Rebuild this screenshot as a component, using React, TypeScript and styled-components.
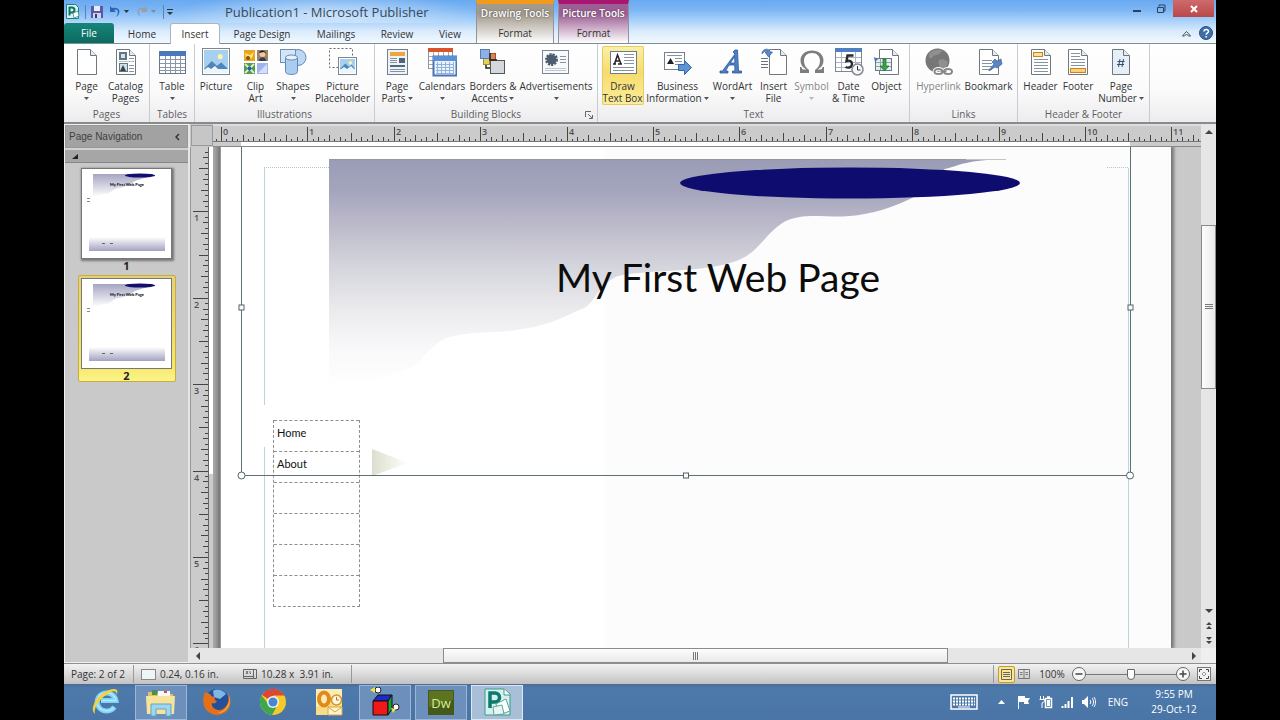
import React from "react";
import styled, { createGlobalStyle, css } from "styled-components";

const GlobalStyle = createGlobalStyle`
  *, *::before, *::after { box-sizing: border-box; }
  body { margin: 0; background: #000; }
  button { font: inherit; color: inherit; padding: 0; margin: 0; border: 0; background: none; }
  svg { display: block; flex: none; }
`;

const Shell = styled.div`
  display: flex;
  flex-direction: column;
  height: 100vh;
  min-height: 480px;
  margin: 0 5%;
  overflow: hidden;
  font: 10px/12px "Open Sans", "Noto Sans", sans-serif;
  color: #333;
`;

/* ---------- Title bar and tabs ---------- */

const TopBar = styled.header`
  display: flex;
  height: 44px;
  flex: none;
  background: linear-gradient(#68a9f0 0, #7db6f4 10px, #a5cff9 20px, #d9eafc 31px, #f3f9fe 43px);
  border-bottom: 1px solid #7c8f94;
`;

const TopLeft = styled.div`
  display: flex;
  flex-direction: column;
  width: 412px;
  flex: none;
`;

const TitleRow = styled.div`
  display: flex;
  align-items: center;
  height: 23px;
  background: radial-gradient(ellipse 150px 22px at 64% 60%, rgba(255, 255, 255, 0.55), rgba(255, 255, 255, 0));
`;

const QuickAccess = styled.div`
  display: flex;
  align-items: center;
  gap: 4px;
  width: 161px;
  height: 20px;
`;

const QuickButton = styled.button`
  display: flex;
  align-items: center;
`;

const Title = styled.h1`
  margin: 0;
  font-size: 13px;
  line-height: 20px;
  font-weight: 400;
  white-space: nowrap;
  color: #38485a;
`;

const TabRow = styled.nav`
  display: flex;
  height: 20px;
`;

const Tab = styled.button<{ $w: number; $kind?: "file" | "active" }>`
  width: ${(p) => p.$w}px;
  height: 21px;
  text-align: center;
  ${(p) =>
    p.$kind === "file" &&
    css`
      height: 20px;
      color: #fff;
      border-radius: 3px 3px 0 0;
      background: linear-gradient(#17857a, #0c6a60);
    `}
  ${(p) =>
    p.$kind === "active" &&
    css`
      background: #fff;
      border: 1px solid #a9b6c2;
      border-bottom: 0;
      border-radius: 3px 3px 0 0;
    `}
`;

const ContextGroup = styled.div<{ $w: number; $accent: string; $shade: string }>`
  display: flex;
  flex-direction: column;
  width: ${(p) => p.$w}px;
  margin-right: 4px;
  border-top: 4px solid ${(p) => p.$accent};
  border-left: 1px solid #8f94a0;
  border-right: 1px solid #8f94a0;
  background: linear-gradient(${(p) => p.$shade} 0, ${(p) => p.$shade} 10px, #fff 39px);
`;

const ContextTitle = styled.span`
  height: 19px;
  line-height: 19px;
  font-weight: 600;
  color: #fff;
  text-align: center;
  white-space: nowrap;
  text-shadow: 0 0 2px #444;
`;

const ContextTab = styled.button`
  height: 20px;
  text-align: center;
`;

const TopRight = styled.div`
  display: flex;
  flex: 1;
  flex-direction: column;
  align-items: flex-end;
  justify-content: space-between;
`;

const WindowButtons = styled.div`
  display: flex;
  padding-right: 2px;
`;

const WindowButton = styled.button<{ $close?: boolean }>`
  display: flex;
  align-items: center;
  justify-content: center;
  width: ${(p) => (p.$close ? 41 : 24)}px;
  height: 17px;
  background: ${(p) => (p.$close ? "linear-gradient(#cf6a6c, #b9474a)" : "none")};
`;

const HelpButtons = styled.div`
  display: flex;
  align-items: center;
  gap: 8px;
  height: 20px;
  padding-right: 3px;
`;

/* ---------- Ribbon ---------- */

const Ribbon = styled.section`
  display: flex;
  flex: none;
  height: 78px;
  background: linear-gradient(#fff, #fbfbfc 45px, #ececee);
`;

const Group = styled.div<{ $w: number }>`
  position: relative;
  display: flex;
  flex-direction: column;
  flex: none;
  width: ${(p) => p.$w}px;
  border-right: 1px solid #c9cbce;
`;

const GroupButtons = styled.div`
  display: flex;
  justify-content: center;
  height: 63px;
  padding-top: 2px;
`;

const GroupLabel = styled.div`
  line-height: 14px;
  text-align: center;
  color: #5e5e5e;
`;

const Launcher = styled.button`
  position: absolute;
  right: 4px;
  bottom: 3px;
`;

const Tool = styled.button<{ $w: number; $lit?: boolean; $dim?: boolean }>`
  display: flex;
  flex-direction: column;
  align-items: center;
  flex: none;
  width: ${(p) => p.$w}px;
  height: 59px;
  padding-top: 2px;
  border: 0;
  border-radius: 2px;
  line-height: 12px;
  color: ${(p) => (p.$dim ? "#858585" : "#333")};
  ${(p) =>
    p.$lit &&
    css`
      background: linear-gradient(#faf0a8, #f6dc6a 45%, #fbee9c);
      box-shadow: inset 0 0 0 1px #e3cb6a;
    `}
`;

const ToolText = styled.span`
  display: flex;
  align-items: center;
  justify-content: center;
  gap: 2px;
  height: 12px;
  white-space: nowrap;
`;

const IconSlot = styled.span`
  height: 32px;
`;

const Caret = ({ dim }: { dim?: boolean }) => (
  <svg width="5" height="3" viewBox="0 0 5 3">
    <path d="M0 0h5L2.500 3z" fill={dim ? "#b5b5b5" : "#555"} />
  </svg>
);

/* ---------- Icons ---------- */

const Big = ({ children }: { children: React.ReactNode }) => (
  <svg width="30" height="29" viewBox="0 0 30 29" aria-hidden="true">
    {children}
  </svg>
);

const Sheet = ({ x = 5, w = 20, fill = "#fff" }: { x?: number; w?: number; fill?: string }) => (
  <g stroke="#70777f" strokeLinejoin="round">
    <path d={`M${x + 0.5} 1.5h${w - 7}l6 6v19h-${w - 1}z`} fill={fill} />
    <path d={`M${x + w - 6.5} 1.5v6h6`} fill="#e6ebf0" />
  </g>
);

const Lines = ({ x, y, w, n, gap = 3, c = "#8793a3" }: { x: number; y: number; w: number; n: number; gap?: number; c?: string }) => (
  <path d={Array.from({ length: n }, (_, i) => `M${x} ${y + i * gap}h${w}`).join("")} stroke={c} fill="none" />
);

const Scenery = ({ x, y, w, h }: { x: number; y: number; w: number; h: number }) => (
  <g>
    <rect x={x + 0.5} y={y + 0.5} width={w - 1} height={h - 1} fill="#fff" stroke="#7b8894" />
    <rect x={x + 2} y={y + 2} width={w - 4} height={h - 4} fill="#a6d0ee" />
    <circle cx={x + w * 0.65} cy={y + h * 0.32} r={w * 0.09} fill="#fff3b0" />
    <path
      d={`M${x + 2} ${y + h - 6}l${w * 0.28} -${h * 0.3}l${w * 0.18} ${h * 0.18}l${w * 0.16} -${h * 0.12}L${x + w - 2} ${y + h - 6}z`}
      fill="#4f86b8"
    />
    <path d={`M${x + 2} ${y + h - 5}l4 -3l3 2l4 -3l3 3L${x + w - 2} ${y + h - 6}V${y + h - 2}H${x + 2}z`} fill="#eaf5fc" />
  </g>
);

const icons: Record<string, React.ReactNode> = {
  page: (
    <Big>
      <Sheet />
    </Big>
  ),
  catalog: (
    <Big>
      <Sheet />
      <rect x="8" y="4" width="8" height="8" fill="#5f7582" />
      <rect x="10" y="6" width="4" height="4" fill="#d5e0e8" />
      <rect x="8.500" y="15.500" width="8" height="8" fill="#d5dde2" stroke="#5f7582" />
      <path d="M9 23l3-6 3 6z" fill="#34444e" />
      <Lines x={18} y={10.5} w={5} n={2} />
      <Lines x={18} y={17.5} w={5} n={3} />
      <Lines x={8} y={13.5} w={14} n={1} c="#b8c0c8" />
    </Big>
  ),
  table: (
    <Big>
      <rect x="2.500" y="3.500" width="26" height="22" fill="#fff" stroke="#6b7888" />
      <rect x="2" y="3" width="27" height="5" fill="#4a78bd" />
      <path d="M3 11.500h25M3 15.500h25M3 19.500h25M3 22.500h25M8.500 8v17M13.500 8v17M18.500 8v17M23.500 8v17" stroke="#8898aa" />
    </Big>
  ),
  picture: (
    <Big>
      <Scenery x={1} y={0} w={28} h={27} />
    </Big>
  ),
  clipart: (
    <Big>
      <rect x="3" y="2" width="11" height="11" fill="#e8a321" />
      <path d="M4 5l5 2 4-3-2 6-6 1z" fill="#ffe36a" />
      <circle cx="7" cy="10" r="2" fill="#8b4b16" />
      <rect x="16" y="2" width="11" height="11" fill="#9c8068" />
      <circle cx="21.500" cy="6" r="3" fill="#f0c8a0" />
      <path d="M18 13c0-5 7-5 7 0z" fill="#343c58" />
      <path d="M18 5c1-4 7-3 7 1l-2-2z" fill="#2c2018" />
      <rect x="3" y="15" width="11" height="11" fill="#4f9a56" />
      <path d="M4 16l9 9M13 16l-9 9" stroke="#dcefb8" strokeWidth="2" />
      <circle cx="8.500" cy="20.500" r="2" fill="#2e58b4" />
      <rect x="16" y="15" width="11" height="11" fill="#9fb4ee" />
      <path d="M17 25l9-9v9z" fill="#d7def9" />
    </Big>
  ),
  shapes: (
    <Big>
      <circle cx="20" cy="9.500" r="8" fill="#bcd8f2" stroke="#6289b4" />
      <rect x="2.500" y="1.500" width="15" height="13" fill="#d3e5f6" stroke="#6f8fb2" />
      <path d="M7.500 9.500v14c0 4 12 4 12 0v-14z" fill="#a9ccf0" stroke="#6289b4" />
      <ellipse cx="13.500" cy="9.500" rx="6" ry="2.500" fill="#e6f2fc" stroke="#6289b4" />
    </Big>
  ),
  placeholder: (
    <Big>
      <path d="M1.500 .5h23v19h-23z" fill="#fff" stroke="#666" strokeDasharray="2 2" />
      <Scenery x={10} y={9} w={19} h={18} />
    </Big>
  ),
  pageparts: (
    <Big>
      <rect x="5.500" y="1.500" width="20" height="25" fill="#eef3f9" stroke="#707f90" />
      <rect x="8" y="4" width="15" height="4" fill="#f0a43c" />
      <Lines x={8} y={10.5} w={7} n={3} gap={2} />
      <rect x="17" y="10" width="6" height="5" fill="#4f6276" />
      <rect x="8" y="17" width="15" height="2" fill="#56697c" />
      <Lines x={8} y={21.5} w={15} n={2} gap={2} />
    </Big>
  ),
  calendars: (
    <Big>
      <rect x="1.500" y=".5" width="24" height="20" fill="#fff" stroke="#8a97a6" />
      <rect x="1" y="0" width="25" height="4" fill="#d9542b" />
      <path d="M2 8.500h23M2 12.500h23M2 16.500h23M6.500 4v16M11.500 4v16M16.500 4v16M21.500 4v16" stroke="#c0a398" />
      <rect x="6.500" y="8.500" width="23" height="19" fill="#eaf3fc" stroke="#4a74b4" strokeWidth="2" />
      <rect x="6" y="8" width="24" height="5" fill="#5b8fd6" />
      <path d="M9 16.500h18M9 19.500h18M9 22.500h18M9 25.500h18M10.500 14v12M14.500 14v12M18.500 14v12M22.500 14v12M26.500 14v12" stroke="#8fb2de" />
    </Big>
  ),
  borders: (
    <Big>
      <rect x="11.500" y="5.500" width="6" height="6" fill="#e0824e" stroke="#9a5428" />
      <rect x="5.500" y="10.500" width="6" height="6" fill="#e6d25a" stroke="#a08c28" />
      <rect x="2.500" y="1.500" width="9" height="9" fill="#8db1e6" stroke="#5a7cb4" />
      <rect x="12.500" y="12.500" width="14" height="13" fill="#d4d7db" stroke="#555" />
      <path d="M12 5v7h7M8 17v3h4" fill="none" stroke="#222" strokeWidth="1.500" />
    </Big>
  ),
  ads: (
    <Big>
      <rect x="1.500" y="2.500" width="26" height="23" fill="#f7f9fb" stroke="#7a8694" />
      <circle cx="10.500" cy="11.500" r="5" fill="#4d5d70" />
      <circle cx="10.500" cy="11.500" r="5" fill="none" stroke="#4d5d70" strokeWidth="3" strokeDasharray="2 1" />
      <Lines x={19} y={8.5} w={6} n={3} />
      <Lines x={4} y={20.5} w={21} n={2} gap={2} c="#c0c7ce" />
    </Big>
  ),
  textbox: (
    <Big>
      <rect x="2.500" y="3.500" width="26" height="22" fill="#fff" stroke="#6d7c8d" />
      <path d="M5 16h3M10 16h4M6.500 16l3-9 3.500 9M7.500 13h4" stroke="#222" strokeWidth="1.500" fill="none" />
      <Lines x={16} y={6.5} w={10} n={4} />
      <Lines x={5} y={19.5} w={21} n={2} />
    </Big>
  ),
  business: (
    <Big>
      <rect x="1.500" y="4.500" width="20" height="17" fill="#fff" stroke="#75818e" />
      <path d="M4 16l3.500-6 3.500 6z" fill="#222" />
      <Lines x={4} y={7.5} w={15} n={1} />
      <Lines x={12} y={10.5} w={7} n={3} />
      <path d="M15.500 16.500h6v-4l7 7-7 7v-4h-6z" fill="#5e93d4" stroke="#3765a4" />
    </Big>
  ),
  wordart: (
    <Big>
      <path
        d="M19.500 2l1 21h3v2h-9v-2h2.500l-.3-6H11l-3.500 6H10v2H2v-2h2.500L17 6l-2-2 2-2zM16.600 8.500L12.300 15h4.600z"
        fill="#4b80c8"
        stroke="#2c5697"
        strokeWidth=".8"
      />
    </Big>
  ),
  insertfile: (
    <Big>
      <Sheet x={10} w={18} />
      <Lines x={2} y={10.5} w={7} n={4} c="#66717e" />
      <path d="M3 6c0-6 8-6 8-2h2.500L9.500 9 6 4h2.500C8 2 5 3 3 6z" fill="#5a8bce" stroke="#365f9c" strokeWidth=".7" />
    </Big>
  ),
  symbol: (
    <Big>
      <path
        d="M3 25h9v-3c-3-2-5-5-5-9 0-5 3-8 8-8s8 3 8 8c0 4-2 7-5 9v3h9v-6h-1.500c-.3 2-1 2.500-2.500 2.500h-2.500c4-2 6-5 6-9 0-6-5-10-11.500-10S3.500 6.500 3.500 12.500c0 4 2 7 6 9H7c-1.500 0-2.200-.5-2.500-2.500H3z"
        fill="#7d7d7d"
      />
    </Big>
  ),
  date: (
    <Big>
      <rect x="1.500" y=".5" width="26" height="23" fill="#fff" stroke="#7a8796" />
      <rect x="1" y="0" width="27" height="4" fill="#4f7fc4" />
      <path d="M2 9.500h25M2 14.500h25M2 19.500h25M7.500 4v19M21.500 4v19" stroke="#a9b5c2" />
      <path d="M19.500 7.500h-6l-1 5.500c3-1 5.500 0 5.500 3s-3 4.500-6.500 3" fill="none" stroke="#2a2a2a" strokeWidth="2.400" />
      <circle cx="23.500" cy="21.500" r="5.500" fill="#f7f9fb" stroke="#808a94" strokeWidth="1.500" />
      <path d="M23.500 18v4h3" fill="none" stroke="#333" />
    </Big>
  ),
  object: (
    <Big>
      <Sheet x={7} w={20} />
      <rect x="3.500" y="10.500" width="16" height="12" fill="#e6eee6" stroke="#5e7d8e" />
      <path d="M4 14.500h15M4 18.500h15M8.500 11v11" stroke="#8fa6b0" />
      <path d="M11 11v7H8l4.500 5 4.500-5h-3v-7z" fill="#3aa148" stroke="#1e6e2b" strokeWidth=".7" />
      <path d="M2 9l4 2-3 3z" fill="#3b74c0" />
    </Big>
  ),
  hyperlink: (
    <Big>
      <circle cx="13.500" cy="12.500" r="12" fill="#777" />
      <path d="M5 6c4-5 10-5 14-3-3 1-3 4-7 4-3 0-3 4-7 3zM15 12c4-2 7 0 9 2-1 5-4 8-7 9 0-4-4-6-2-11z" fill="#8f8f8f" />
      <g fill="none" stroke="#fff" strokeWidth="4">
        <ellipse cx="14.500" cy="23.500" rx="4" ry="2.500" />
        <ellipse cx="24" cy="23.500" rx="4" ry="2.500" />
      </g>
      <g fill="none" stroke="#888" strokeWidth="2">
        <ellipse cx="14.500" cy="23.500" rx="4" ry="2.500" />
        <ellipse cx="24" cy="23.500" rx="4" ry="2.500" />
        <path d="M16.500 23.500h6" />
      </g>
    </Big>
  ),
  bookmark: (
    <Big>
      <Sheet />
      <Lines x={8} y={12.5} w={10} n={4} />
      <path d="M15 22l5-6-2-2 3-3 2 2 4-2 1 5-5 4-2-1-6 4z" fill="#5a85c4" stroke="#36588e" strokeWidth=".6" />
    </Big>
  ),
  header: (
    <Big>
      <Sheet />
      <rect x="7.500" y="4.500" width="9" height="4" fill="#fbe09a" stroke="#c78520" />
      <Lines x={8} y={11.5} w={14} n={5} />
    </Big>
  ),
  footer: (
    <Big>
      <Sheet />
      <Lines x={8} y={5.5} w={9} n={2} />
      <Lines x={8} y={11.5} w={14} n={3} />
      <rect x="7.500" y="20.500" width="15" height="4" fill="#fbcf7c" stroke="#c78520" />
    </Big>
  ),
  pagenumber: (
    <Big>
      <Sheet x={6} w={18} fill="#e4effa" />
      <path d="M14 11l-1.500 8M17.500 11L16 19M11.500 13.500h7M11 16.500h7" stroke="#3c4a66" />
    </Big>
  ),
};

/* ---------- Ribbon data ---------- */

type ToolDef = { icon: string; w: number; lines: string[]; drop?: boolean; lit?: boolean; dim?: boolean };
type GroupDef = { label: string; w: number; launcher?: boolean; tools: ToolDef[] };

const groups: GroupDef[] = [
  {
    label: "Pages",
    w: 86,
    tools: [
      { icon: "page", w: 38, lines: ["Page"], drop: true },
      { icon: "catalog", w: 40, lines: ["Catalog", "Pages"] },
    ],
  },
  { label: "Tables", w: 45, tools: [{ icon: "table", w: 42, lines: ["Table"], drop: true }] },
  {
    label: "Illustrations",
    w: 180,
    tools: [
      { icon: "picture", w: 41, lines: ["Picture"] },
      { icon: "clipart", w: 38, lines: ["Clip", "Art"] },
      { icon: "shapes", w: 37, lines: ["Shapes"], drop: true },
      { icon: "placeholder", w: 62, lines: ["Picture", "Placeholder"] },
    ],
  },
  {
    label: "Building Blocks",
    w: 223,
    launcher: true,
    tools: [
      { icon: "pageparts", w: 38, lines: ["Page", "Parts"], drop: true },
      { icon: "calendars", w: 52, lines: ["Calendars"], drop: true },
      { icon: "borders", w: 50, lines: ["Borders &", "Accents"], drop: true },
      { icon: "ads", w: 76, lines: ["Advertisements"], drop: true },
    ],
  },
  {
    label: "Text",
    w: 312,
    tools: [
      { icon: "textbox", w: 42, lines: ["Draw", "Text Box"], lit: true },
      { icon: "business", w: 68, lines: ["Business", "Information"], drop: true },
      { icon: "wordart", w: 42, lines: ["WordArt"], drop: true },
      { icon: "insertfile", w: 40, lines: ["Insert", "File"] },
      { icon: "symbol", w: 36, lines: ["Symbol"], drop: true, dim: true },
      { icon: "date", w: 38, lines: ["Date", "& Time"] },
      { icon: "object", w: 38, lines: ["Object"] },
    ],
  },
  {
    label: "Links",
    w: 108,
    tools: [
      { icon: "hyperlink", w: 50, lines: ["Hyperlink"], dim: true },
      { icon: "bookmark", w: 50, lines: ["Bookmark"] },
    ],
  },
  {
    label: "Header & Footer",
    w: 132,
    tools: [
      { icon: "header", w: 39, lines: ["Header"] },
      { icon: "footer", w: 36, lines: ["Footer"] },
      { icon: "pagenumber", w: 50, lines: ["Page", "Number"], drop: true },
    ],
  },
];

const tabs: { label: string; w: number; kind?: "file" | "active" }[] = [
  { label: "File", w: 50, kind: "file" },
  { label: "Home", w: 56 },
  { label: "Insert", w: 50, kind: "active" },
  { label: "Page Design", w: 84 },
  { label: "Mailings", w: 64 },
  { label: "Review", w: 58 },
  { label: "View", w: 48 },
];

/* ---------- Workspace ---------- */

const Workspace = styled.main`
  display: flex;
  flex: 1;
  min-height: 0;
  border-top: 2px solid #8a8a8a;
  background: #c9c9c9;
`;

const NavPane = styled.aside`
  display: flex;
  flex-direction: column;
  width: 126px;
  flex: none;
  border: 1px solid #f2f2f2;
  border-right: 2px solid #e6e6e6;
  background: #c9c9c9;
`;

const NavHead = styled.div`
  display: flex;
  align-items: center;
  justify-content: space-between;
  height: 23px;
  padding: 0 7px 0 3px;
  font-family: "Liberation Sans", sans-serif;
  font-size: 10px;
  color: #3f3f3f;
  background: #a2a2a2;
  border: 1px solid #979797;
`;

const NavSub = styled.div`
  height: 15px;
  padding: 4px 7px;
  background: #a6a6a6;
  border-top: 2px solid #d2d2d2;
  border-bottom: 1px solid #888;
`;

const PageList = styled.div`
  display: flex;
  flex-direction: column;
  align-items: center;
  gap: 3px;
  padding-top: 2px;
`;

const PageItem = styled.button<{ $selected?: boolean }>`
  display: flex;
  flex-direction: column;
  align-items: center;
  width: 98px;
  height: 107px;
  padding-top: 2px;
  font-size: 11px;
  line-height: 13px;
  font-weight: 700;
  color: #222;
  border: 1px solid ${(p) => (p.$selected ? "#c8ad3e" : "transparent")};
  border-radius: 2px;
  background: ${(p) => (p.$selected ? "linear-gradient(#e4d07a, #f5e66c 90px, #fdf48a)" : "none")};

  svg {
    background: #fff;
    border: 1px solid #777;
    box-shadow: ${(p) => (p.$selected ? "none" : "1px 1px 2px 1px #777")};
  }
`;

const Editor = styled.div`
  display: grid;
  flex: 1;
  min-width: 0;
  grid-template-columns: 23px minmax(0, 1fr) 15px;
  grid-template-rows: 23px minmax(0, 1fr) 15px;
`;

const RulerCorner = styled.div`
  margin: 1px 0 1px 1px;
  border: 1px solid #999;
  background: #c6c6c6;
`;

const RulerCell = styled.div`
  overflow: hidden;
  background: #cbcbcb;
  font-size: 9px;
  font-weight: 600;
`;

const Canvas = styled.div`
  position: relative;
  overflow: hidden;
  background: linear-gradient(90deg, #aaa 0, #999 3px, #777 7px, #c9c9c9 8px);
`;

const Publication = styled.article`
  position: absolute;
  top: 0;
  bottom: 0;
  left: 8px;
  width: 950px;
  background: linear-gradient(90deg, #fff 383px, #fcfcfc 384px);
  box-shadow: 2px 0 3px 1px #777;
  overflow: hidden;
`;

const Artwork = styled.svg`
  position: absolute;
  top: 0;
  left: 0;
`;

const Heading = styled.h2`
  position: absolute;
  top: 106px;
  left: 335px;
  margin: 0;
  font: 400 39px/48px Lato, "Open Sans", sans-serif;
  white-space: nowrap;
  color: #0c0c0c;
`;

const SiteLinks = styled.ul`
  position: absolute;
  top: 273px;
  left: 52px;
  width: 87px;
  margin: 0;
  padding: 0;
  list-style: none;
  font: 11px/24px Lato, "Open Sans", sans-serif;
  color: #111;
  border: 1px dashed #8f8f8f;
  border-top: 0;

  li {
    height: 31px;
    padding-left: 3px;
    border-top: 1px dashed #8f8f8f;
  }
`;

const VScroll = styled.div`
  display: flex;
  flex-direction: column;
  grid-row: 1 / 3;
  grid-column: 3;
  background: #e6e6e6;
`;

const HScroll = styled.div`
  display: flex;
  grid-row: 3;
  grid-column: 1 / 3;
  background: #e6e6e6;
`;

const ScrollCorner = styled.div`
  background: #efefef;
`;

const Arrow = styled.button`
  display: flex;
  align-items: center;
  justify-content: center;
  flex: 0 0 15px;
`;

const Gap = styled.div<{ $grow: number }>`
  flex: ${(p) => p.$grow} 1 0;
`;

const Thumb = styled.div<{ $grow: number; $vertical?: boolean }>`
  display: flex;
  align-items: center;
  justify-content: center;
  flex: ${(p) => p.$grow} 1 0;
  border: 1px solid #8b8b8b;
  background: linear-gradient(${(p) => (p.$vertical ? "90deg" : "180deg")}, #fdfdfd, #e9e9e9);
`;

/* ---------- Status bar ---------- */

const StatusBar = styled.footer`
  display: flex;
  align-items: center;
  flex: none;
  height: 21px;
  padding-right: 5px;
  border-top: 1px solid #8f8f8f;
  background: linear-gradient(#f3f3f3, #c2c2c2);
`;

const StatusItem = styled.div<{ $w: number; $divided?: boolean }>`
  display: flex;
  align-items: center;
  gap: 4px;
  width: ${(p) => p.$w}px;
  height: 18px;
  padding-left: 7px;
  white-space: pre;
  border-right: ${(p) => (p.$divided ? "1px solid #999" : "0")};
`;

const ZoomTools = styled.div`
  display: flex;
  align-items: center;
  margin-left: auto;
  height: 18px;
  padding-left: 4px;
  border-left: 1px solid #999;
`;

const ViewButton = styled.button<{ $on?: boolean }>`
  display: flex;
  align-items: center;
  justify-content: center;
  width: 17px;
  height: 17px;
  border-radius: 2px;
  ${(p) =>
    p.$on &&
    css`
      background: #fbe694;
      border: 1px solid #c59a2a;
    `}
`;

const ZoomValue = styled.span`
  width: 40px;
  text-align: center;
`;

const RoundButton = styled.button`
  display: flex;
`;

const ZoomSlider = styled.input`
  appearance: none;
  width: 90px;
  height: 14px;
  margin: 0;
  background: linear-gradient(#777, #777) center / 100% 1px no-repeat;

  &::-webkit-slider-thumb {
    appearance: none;
    width: 8px;
    height: 11px;
    border: 1px solid #666;
    border-radius: 1px 1px 4px 4px;
    background: #fff;
  }
`;

const FitButton = styled.button`
  margin-left: 7px;
`;

/* ---------- Taskbar ---------- */

const Taskbar = styled.div`
  display: flex;
  align-items: center;
  flex: none;
  height: 36px;
  padding: 0 4px 0 15px;
  color: #fff;
  background: linear-gradient(#4a6c96, #4d79ab 4px, #4a74a6);
`;

const AppButton = styled.button<{ $state?: "open" | "front" }>`
  display: flex;
  align-items: center;
  justify-content: center;
  width: 52px;
  height: 35px;
  margin-right: 4px;
  border: 1px solid transparent;
  ${(p) =>
    p.$state === "open" &&
    css`
      background: #6c90bb;
      border-color: #9db6d4;
    `}
  ${(p) =>
    p.$state === "front" &&
    css`
      background: #a9bfd8;
      border-color: #dde7f1;
    `}
`;

const Tray = styled.div`
  display: flex;
  align-items: center;
  gap: 8px;
  margin-left: auto;
`;

const TrayButton = styled.button<{ $gapAfter?: number }>`
  display: flex;
  margin-right: ${(p) => p.$gapAfter ?? 0}px;
`;

const Clock = styled.time`
  width: 76px;
  text-align: center;
  line-height: 15px;
`;

/* ---------- Rulers ---------- */

const INCH = 86.4;
const tickLength = (n: number) => (n % 16 === 0 ? 15 : n % 8 === 0 ? 9 : n % 4 === 0 ? 7 : n % 2 === 0 ? 5 : 3);

const HorizontalRuler = () => {
  const ticks = Array.from({ length: 192 }, (_, i) => i - 1);
  const at = (n: number) => Math.round(8 + (n * INCH) / 16);
  return (
    <svg width="2000" height="23" aria-hidden="true">
      <rect width="2000" height="2" fill="#ddd" />
      <rect x="28" y="18" width="889" height="4" fill="#fff" />
      <path d={ticks.map((n) => `M${at(n) + 0.5} 18v-${tickLength(n)}`).join("")} stroke="#444" />
      <path d="M0 17.500H2000" stroke="#777" />
      <path d="M0 22.500H2000" stroke="#888" />
      {Array.from({ length: 12 }, (_, i) => (
        <text key={i} x={at(i * 16) + 2} y={11} fill="#505050">
          {i}
        </text>
      ))}
    </svg>
  );
};

const VerticalRuler = () => {
  const ticks = Array.from({ length: 160 }, (_, i) => i + 5);
  const at = (n: number) => Math.round(-22 + (n * INCH) / 16);
  return (
    <svg width="23" height="1000" aria-hidden="true">
      <rect width="1" height="1000" fill="#999" />
      <rect x="19" width="4" height="327" fill="#fff" />
      <path d={ticks.map((n) => `M18 ${at(n) + 0.5}h-${tickLength(n)}`).join("")} stroke="#444" />
      <path d="M18.500 0V1000" stroke="#666" />
      {Array.from({ length: 6 }, (_, i) => (
        <text key={i} x={4} y={at((i + 1) * 16) + 10} fill="#505050">
          {i + 1}
        </text>
      ))}
    </svg>
  );
};

/* ---------- Drawings ---------- */

const WAVE =
  "M108 12H785C745 13 740 18 724 22C712 28 700 45 691 51C665 64 640 69 622 69.500C600 70 580 66 563 75C543 87 537 108 512 115C480 126 430 122 397 129C375 138 374 160 358 163C340 172 320 180 301 182C280 187 250 183 225 191C205 202 200 216 191 220C160 232 135 238 108 241Z";

const Banner = () => (
  <Artwork width="950" height="700" aria-hidden="true">
    <defs>
      <linearGradient id="wash" x1="0" y1="0" x2="0" y2="1">
        <stop offset="0" stopColor="#9a9cb6" />
        <stop offset=".14" stopColor="#a4a5bd" />
        <stop offset=".26" stopColor="#b8b6c7" />
        <stop offset=".45" stopColor="#d2d2db" />
        <stop offset=".66" stopColor="#ebebee" />
        <stop offset=".82" stopColor="#f8f8fa" />
        <stop offset="1" stopColor="#fff" />
      </linearGradient>
      <linearGradient id="wedge">
        <stop offset="0" stopColor="#dcdecd" />
        <stop offset="1" stopColor="#fff" />
      </linearGradient>
    </defs>
    <path d="M43.500 21V258M43.500 300V700M907.500 21V700" stroke="#bcd4de" />
    <path d="M43 20.500H108M886 20.500H907" stroke="#b4c6d0" strokeDasharray="1 1" />
    <path d={WAVE} fill="url(#wash)" />
    <path d="M108 12.500H745" stroke="#97979f" />
    <path d="M745 12.500H785" stroke="#c4c4c8" />
    <ellipse cx="629" cy="36" rx="170" ry="15.500" fill="#0f0c70" />
    <path d="M151 302L187 316L151 329Z" fill="url(#wedge)" />
  </Artwork>
);

const SelectionFrame = () => (
  <Artwork width="950" height="700" aria-hidden="true">
    <path d="M20.500 0V328.500H909.500V0" fill="none" stroke="#5d7076" />
    <g fill="#fff" stroke="#4d6468">
      <rect x="18" y="158" width="5" height="5" />
      <rect x="907" y="158" width="5" height="5" />
      <rect x="462.500" y="326" width="5" height="5" />
      <circle cx="20.500" cy="328.500" r="3.500" />
      <circle cx="909" cy="328.500" r="3.500" />
    </g>
  </Artwork>
);

const PageThumb = ({ id }: { id: string }) => (
  <svg width="91" height="91" viewBox="0 0 89 89" aria-hidden="true">
    <defs>
      <linearGradient id={`${id}a`} x1="0" y1="0" x2="0" y2="1">
        <stop offset="0" stopColor="#a5a5c3" />
        <stop offset="1" stopColor="#fff" />
      </linearGradient>
      <linearGradient id={`${id}b`} x1="0" y1="0" x2="0" y2="1">
        <stop offset="0" stopColor="#fff" />
        <stop offset="1" stopColor="#a3a3c0" />
      </linearGradient>
    </defs>
    <path d="M11 5h60c-10 6-18 5-22 10c-10 5-16 3-20 8c-5 3-12 2-18 5z" fill={`url(#${id}a)`} />
    <ellipse cx="58" cy="6.500" rx="15" ry="2" fill="#12106e" />
    <text x="45" y="17" textAnchor="middle" fontFamily="Lato" fontSize="4" fontWeight="900" fill="#111">
      My First Web Page
    </text>
    <path d="M5 29.500h3M5 32.500h3" stroke="#888" />
    <rect x="7" y="68" width="76" height="14" fill={`url(#${id}b)`} />
    <path d="M20 74.500h3M28 74.500h3" stroke="#666" />
  </svg>
);

const Triangle = ({ dir, double }: { dir: "up" | "down" | "left" | "right"; double?: boolean }) => {
  const d = { up: "M0 6L4 2L8 6z", down: "M0 2L4 6L8 2z", left: "M6 0L2 4L6 8z", right: "M2 0L6 4L2 8z" }[dir];
  return (
    <svg width="8" height="8" viewBox="0 0 8 8" aria-hidden="true">
      {double ? (
        <path d={dir === "up" ? "M1 3L4 0L7 3zM1 7L4 4L7 7z" : "M1 0L4 3L7 0zM1 4L4 7L7 4z"} fill="#444" />
      ) : (
        <path d={d} fill="#444" />
      )}
    </svg>
  );
};

const Grip = ({ vertical }: { vertical?: boolean }) => (
  <svg width="8" height="8" aria-hidden="true">
    <path d={vertical ? "M0 1.500h8M0 3.500h8M0 5.500h8" : "M1.500 0v8M3.500 0v8M5.500 0v8"} stroke="#777" />
  </svg>
);

/* ---------- Taskbar icons ---------- */

const AppArt = ({ children }: { children: React.ReactNode }) => (
  <svg width="30" height="30" viewBox="0 0 30 30" aria-hidden="true">
    {children}
  </svg>
);

const apps: { name: string; state?: "open" | "front"; art: React.ReactNode }[] = [
  {
    name: "Internet Explorer",
    art: (
      <AppArt>
        <path d="M24.500 20a9.500 9 0 1 1 1.500-6.500H11" fill="none" stroke="#7ed4f6" strokeWidth="5" />
        <path d="M24 20.500a9.500 9 0 1 1 2-7H11" fill="none" stroke="#b5e9fc" strokeWidth="1.500" />
        <path d="M5 27C-2 22 9 3 24 2c4 0 4 3 2.500 6C27 4 24 3 19 6C10 11 3 21 5 27z" fill="#f4d23c" />
      </AppArt>
    ),
  },
  {
    name: "File Explorer",
    state: "open",
    art: (
      <AppArt>
        <path d="M2 5h8l2 2h15v18H2z" fill="#e2c263" />
        <path d="M6 3h5v5H6z" fill="#4a8f4c" />
        <path d="M12 4h12v5H12z" fill="#f6f6f6" />
        <path d="M18 4h3v2h-3z" fill="#d64c3c" />
        <path d="M0 9h29l-1 18H1z" fill="#f7e39a" />
        <path d="M5 29V17h20v12h-5v-7H10v7z" fill="#9fd6ee" stroke="#5fa6c8" />
      </AppArt>
    ),
  },
  {
    name: "Firefox",
    art: (
      <AppArt>
        <circle cx="15" cy="14" r="12" fill="#24509a" />
        <path d="M11 4c4-3 10-1 13 3l-6 5-6-2z" fill="#7fb6e4" />
        <path d="M3 5c-4 8-2 22 12 23c14-1 16-14 11-22c2 8-1 16-8 17c-6 0-9-4-8-7c2 1 4 0 5-2c-2 0-3-2-2-4c-3 0-4-1-5-3z" fill="#e5701c" />
        <path d="M26 6c4 9-2 19-11 20c9 1 16-9 11-20z" fill="#f8c63a" />
      </AppArt>
    ),
  },
  {
    name: "Chrome",
    art: (
      <AppArt>
        <circle cx="15" cy="15" r="13" fill="#f5c928" />
        <path d="M15 15L4 8a13 13 0 0 1 22.500.5H15z" fill="#dc4636" />
        <path d="M15 15l-6 .5L3.700 8.500A13 13 0 0 0 14 28l5-9z" fill="#3fa650" />
        <circle cx="15" cy="15" r="6" fill="#f4f4f4" />
        <circle cx="15" cy="15" r="4.500" fill="#4a86d0" />
      </AppArt>
    ),
  },
  {
    name: "Outlook",
    art: (
      <AppArt>
        <path d="M2 2h26v26H2z" fill="#f8dc86" />
        <path d="M2 2h26v8L2 20z" fill="#fcecb4" />
        <ellipse cx="10" cy="12" rx="5" ry="6.500" fill="none" stroke="#e08a1c" strokeWidth="4" />
        <circle cx="22.500" cy="13" r="5" fill="#fdf6dc" stroke="#d0952c" strokeWidth="1.500" />
        <path d="M22.500 10v3h2.500" stroke="#b07a20" fill="none" />
        <path d="M14 20h14v8H14z" fill="#fdf3cc" stroke="#d8a848" />
        <path d="M14 20l7 5 7-5" stroke="#d8a848" fill="none" />
      </AppArt>
    ),
  },
  {
    name: "Shapes",
    state: "open",
    art: (
      <AppArt>
        <path d="M3 14l5-6h14l-4 6z" fill="#1c2cc8" stroke="#111" />
        <path d="M3 14h15v14H3z" fill="#f01818" stroke="#111" />
        <path d="M18 14l4-6v14l-4 6z" fill="#1fa03a" stroke="#111" />
        <circle cx="8" cy="3" r="3" fill="#fff" stroke="#222" />
        <path d="M0 3l5-3v6z" fill="#f1e23a" />
        <circle cx="26" cy="20" r="3" fill="#fff" stroke="#222" />
        <path d="M21 21l5 1-3 4z" fill="#f1e23a" />
      </AppArt>
    ),
  },
  {
    name: "Dreamweaver",
    state: "open",
    art: (
      <AppArt>
        <path d="M2 3h26v25H2z" fill="#46591a" />
        <path d="M3 4h24v9L3 20z" fill="#5c7322" />
        <text x="15" y="21" textAnchor="middle" fontSize="13" fill="#d4ee8e">
          Dw
        </text>
      </AppArt>
    ),
  },
  {
    name: "Publisher",
    state: "front",
    art: (
      <AppArt>
        <path d="M3 2h19l6 5v21H3z" fill="#d9efec" stroke="#3c9b90" />
        <path d="M22 2v6h6" fill="#fff" stroke="#3c9b90" />
        <path d="M8 21V6h5a4.500 4.500 0 0 1 0 9H9" fill="none" stroke="#0d7a6e" strokeWidth="3.500" />
        <path d="M14 17l10-5 4 12-11 4z" fill="#fff" stroke="#5aa79e" />
        <path d="M11 20l9-2 2 9-10 1z" fill="#e8f5f3" stroke="#5aa79e" />
      </AppArt>
    ),
  },
];

/* ---------- App ---------- */

const RibbonTool = ({ tool }: { tool: ToolDef }) => {
  const caretBelow = tool.drop && tool.lines.length === 1;
  return (
    <Tool $w={tool.w} $lit={tool.lit} $dim={tool.dim}>
      <IconSlot>{icons[tool.icon]}</IconSlot>
      {tool.lines.map((line, i) => (
        <ToolText key={line}>
          {line}
          {tool.drop && i === 1 && <Caret />}
        </ToolText>
      ))}
      {caretBelow && (
        <ToolText>
          <Caret dim={tool.dim} />
        </ToolText>
      )}
    </Tool>
  );
};

export default function App() {
  return (
    <Shell>
      <GlobalStyle />
      <TopBar>
        <TopLeft>
          <TitleRow>
            <QuickAccess>
              <svg width="17" height="17" viewBox="0 0 17 17" aria-hidden="true">
                <path d="M2.500 1.500h9l3 3v11h-12z" fill="#dff1ee" stroke="#16857a" />
                <path d="M5.500 12.500v-8h2.500a2.500 2.500 0 0 1 0 5h-2" fill="none" stroke="#0d7266" strokeWidth="2" />
                <path d="M9 10l5-2 1 5-5 2z" fill="#fff" stroke="#16857a" strokeWidth=".7" />
              </svg>
              <svg width="1" height="14" aria-hidden="true">
                <path d="M.5 0v14" stroke="#5d84ad" />
              </svg>
              <QuickButton aria-label="Save">
                <svg width="14" height="14" viewBox="0 0 14 14">
                  <path d="M1 1h12v12H1z" fill="#5a58a8" />
                  <path d="M4 1h6v5H4z" fill="#e9ecf8" />
                  <path d="M3 8h8v5H3z" fill="#cfd3e6" />
                  <path d="M5 9h2v4H5z" fill="#3b3a78" />
                </svg>
              </QuickButton>
              <QuickButton aria-label="Undo">
                <svg width="22" height="14" viewBox="0 0 22 14">
                  <path d="M2 1v6h6L6 5c3-2 6 1 2 7c6-4 4-11-4-9z" fill="#2f62b4" />
                  <path d="M16 5h5l-2.500 3z" fill="#333" />
                </svg>
              </QuickButton>
              <QuickButton aria-label="Redo">
                <svg width="24" height="14" viewBox="0 0 24 14">
                  <path d="M13 1v6H7l2-2c-3-2-6 1-2 7c-6-4-4-11 4-9z" fill="#9a9ca6" />
                  <path d="M17 5h5l-2.500 3z" fill="#7a8ba4" />
                </svg>
              </QuickButton>
              <QuickButton aria-label="Customize">
                <svg width="12" height="14" viewBox="0 0 12 14">
                  <path d="M1.500 0v14" stroke="#5d84ad" />
                  <path d="M5 4.500h6" stroke="#333" />
                  <path d="M5 7h6l-3 3z" fill="#333" />
                </svg>
              </QuickButton>
            </QuickAccess>
            <Title>Publication1 - Microsoft Publisher</Title>
          </TitleRow>
          <TabRow>
            {tabs.map((t) => (
              <Tab key={t.label} $w={t.w} $kind={t.kind}>
                {t.label}
              </Tab>
            ))}
          </TabRow>
        </TopLeft>
        <ContextGroup $w={78} $accent="#f29a1c" $shade="#a39a8c">
          <ContextTitle>Drawing Tools</ContextTitle>
          <ContextTab>Format</ContextTab>
        </ContextGroup>
        <ContextGroup $w={71} $accent="#a8166f" $shade="#9c5e94">
          <ContextTitle>Picture Tools</ContextTitle>
          <ContextTab>Format</ContextTab>
        </ContextGroup>
        <TopRight>
          <WindowButtons>
            <WindowButton aria-label="Minimize">
              <svg width="8" height="8">
                <path d="M0 6h8" stroke="#2d4058" strokeWidth="2" />
              </svg>
            </WindowButton>
            <WindowButton aria-label="Restore">
              <svg width="10" height="10">
                <path d="M3 2.500V1h6v6H7.500M1.500 3.500h6v5h-6z" fill="none" stroke="#2d4058" />
              </svg>
            </WindowButton>
            <WindowButton $close aria-label="Close">
              <svg width="8" height="8">
                <path d="M1 1l6 6M7 1L1 7" stroke="#fff" strokeWidth="2" />
              </svg>
            </WindowButton>
          </WindowButtons>
          <HelpButtons>
            <QuickButton aria-label="Collapse ribbon">
              <svg width="9" height="7">
                <path d="M.5 6L4.500 1.500L8.500 6L6.500 6L4.500 4L2.500 6z" fill="#fff" stroke="#3b4c60" />
              </svg>
            </QuickButton>
            <QuickButton aria-label="Help">
              <svg width="14" height="14" viewBox="0 0 14 14">
                <circle cx="7" cy="7" r="6.500" fill="#3f6ea8" stroke="#2c5184" />
                <path d="M5 5.500c0-3 4.500-2.500 4.500 0c0 1.500-2.300 1.500-2.300 3.300M7.200 10v1.500" fill="none" stroke="#fff" strokeWidth="1.500" />
              </svg>
            </QuickButton>
          </HelpButtons>
        </TopRight>
      </TopBar>

      <Ribbon>
        {groups.map((g) => (
          <Group key={g.label} $w={g.w}>
            <GroupButtons>
              {g.tools.map((t) => (
                <RibbonTool key={t.icon} tool={t} />
              ))}
            </GroupButtons>
            <GroupLabel>{g.label}</GroupLabel>
            {g.launcher && (
              <Launcher aria-label={`${g.label} options`}>
                <svg width="8" height="8">
                  <path d="M.5 6V.5H6M3 3l4 4M7.500 4v3.500H4" fill="none" stroke="#666" />
                </svg>
              </Launcher>
            )}
          </Group>
        ))}
      </Ribbon>

      <Workspace>
        <NavPane>
          <NavHead>
            <span>Page Navigation</span>
            <svg width="5" height="8" aria-hidden="true">
              <path d="M4 1L1 4l3 3" fill="none" stroke="#333" strokeWidth="1.500" />
            </svg>
          </NavHead>
          <NavSub>
            <svg width="6" height="5" aria-hidden="true">
              <path d="M6 0v5H0z" fill="#222" />
            </svg>
          </NavSub>
          <PageList>
            <PageItem>
              <PageThumb id="one" />
              <span>1</span>
            </PageItem>
            <PageItem $selected>
              <PageThumb id="two" />
              <span>2</span>
            </PageItem>
          </PageList>
        </NavPane>

        <Editor>
          <RulerCorner />
          <RulerCell>
            <HorizontalRuler />
          </RulerCell>
          <RulerCell>
            <VerticalRuler />
          </RulerCell>
          <Canvas>
            <Publication>
              <Banner />
              <Heading>My First Web Page</Heading>
              <SiteLinks>
                <li>Home</li>
                <li>About</li>
                <li />
                <li />
                <li />
                <li />
              </SiteLinks>
              <SelectionFrame />
            </Publication>
          </Canvas>
          <VScroll>
            <Arrow aria-label="Scroll up">
              <Triangle dir="up" />
            </Arrow>
            <Gap $grow={87} />
            <Thumb $grow={163} $vertical>
              <Grip vertical />
            </Thumb>
            <Gap $grow={215} />
            <Arrow aria-label="Scroll down">
              <Triangle dir="down" />
            </Arrow>
            <Arrow aria-label="Previous page">
              <Triangle dir="up" double />
            </Arrow>
            <Arrow aria-label="Next page">
              <Triangle dir="down" double />
            </Arrow>
          </VScroll>
          <HScroll>
            <Arrow aria-label="Scroll left">
              <Triangle dir="left" />
            </Arrow>
            <Gap $grow={238} />
            <Thumb $grow={505}>
              <Grip />
            </Thumb>
            <Gap $grow={238} />
            <Arrow aria-label="Scroll right">
              <Triangle dir="right" />
            </Arrow>
          </HScroll>
          <ScrollCorner />
        </Editor>
      </Workspace>

      <StatusBar>
        <StatusItem $w={70} $divided>
          Page: 2 of 2
        </StatusItem>
        <StatusItem $w={102}>
          <svg width="15" height="11" aria-hidden="true">
            <rect x=".5" y=".5" width="14" height="10" fill="#eef5f6" stroke="#888" />
          </svg>
          0.24, 0.16 in.
        </StatusItem>
        <StatusItem $w={116} $divided>
          <svg width="14" height="10" aria-hidden="true">
            <path d="M.5 .5h13v9H.5zM10.500 1v8M1 7.500h9M3 2l2 3M5 2L3 5M7 2v2l1 1" fill="none" stroke="#666" />
          </svg>
          {"10.28 x  3.91 in."}
        </StatusItem>
        <ZoomTools>
          <ViewButton $on aria-label="Single page">
            <svg width="11" height="11">
              <path d="M.5 .5h10v10H.5zM2 3.500h7M2 5.500h7M2 7.500h7" fill="none" stroke="#666" />
            </svg>
          </ViewButton>
          <ViewButton aria-label="Two-page spread">
            <svg width="12" height="10">
              <path d="M.5 .5h11v9H.5zM6 .5v9M2 3.500h2.500M2 5.500h2.500M7.500 3.500H10M7.500 5.500H10" fill="none" stroke="#777" />
            </svg>
          </ViewButton>
          <ZoomValue>100%</ZoomValue>
          <RoundButton aria-label="Zoom out">
            <svg width="14" height="14">
              <circle cx="7" cy="7" r="6.500" fill="#f7f7f7" stroke="#666" />
              <path d="M3.500 7h7" stroke="#444" strokeWidth="1.500" />
            </svg>
          </RoundButton>
          <ZoomSlider type="range" aria-label="Zoom" min={0} max={100} defaultValue={50} />
          <RoundButton aria-label="Zoom in">
            <svg width="14" height="14">
              <circle cx="7" cy="7" r="6.500" fill="#f7f7f7" stroke="#666" />
              <path d="M3.500 7h7M7 3.500v7" stroke="#444" strokeWidth="1.500" />
            </svg>
          </RoundButton>
          <FitButton aria-label="Whole page">
            <svg width="14" height="14">
              <rect x=".5" y=".5" width="13" height="13" fill="#f2f2f2" stroke="#777" />
              <path d="M2.500 5V2.500H5M9 2.500h2.500V5M11.500 9v2.500H9M5 11.500H2.500V9M5 7h1M8 7h1M7 5v1M7 8v1" fill="none" stroke="#444" />
            </svg>
          </FitButton>
        </ZoomTools>
      </StatusBar>

      <Taskbar>
        {apps.map((a) => (
          <AppButton key={a.name} $state={a.state} aria-label={a.name}>
            {a.art}
          </AppButton>
        ))}
        <Tray>
          <TrayButton $gapAfter={12} aria-label="Touch keyboard">
            <svg width="28" height="16" viewBox="0 0 28 16">
              <rect x="1" y="1" width="26" height="14" fill="none" stroke="#fff" strokeWidth="1.500" />
              <path d="M3 4.500h22M3 7.500h22M3 10.500h22" stroke="#fff" strokeWidth="2" strokeDasharray="2 1" />
              <path d="M8 13h12" stroke="#fff" />
            </svg>
          </TrayButton>
          <TrayButton $gapAfter={4} aria-label="Show hidden icons">
            <svg width="7" height="4">
              <path d="M0 4L3.500 0L7 4z" fill="#fff" />
            </svg>
          </TrayButton>
          <TrayButton aria-label="Action center">
            <svg width="14" height="14">
              <path d="M1.500 1v13" stroke="#fff" />
              <path d="M2 1h6v2h5l-2 3 1 3H7V7H2z" fill="#fff" />
            </svg>
          </TrayButton>
          <TrayButton aria-label="Battery">
            <svg width="14" height="14">
              <path d="M6.500 3.500h6v9h-6zM8 2h3" fill="none" stroke="#fff" strokeWidth="1.500" />
              <path d="M8 5h3v6H8z" fill="#fff" />
              <path d="M1.500 1v3M4.500 1v3M.5 4.500h5v2L3 8v5" fill="none" stroke="#fff" />
            </svg>
          </TrayButton>
          <TrayButton aria-label="Network">
            <svg width="13" height="12">
              <path d="M1.500 12v-2M4.500 12V8M7.500 12V5M11 12V1" stroke="#fff" strokeWidth="2" />
            </svg>
          </TrayButton>
          <TrayButton $gapAfter={4} aria-label="Volume">
            <svg width="14" height="14">
              <path d="M0 5h2l4-4v12L2 9H0z" fill="#fff" />
              <path d="M8 5c1 1 1 3 0 4M10 3c2 2 2 6 0 8M12 2c2 3 2 7 0 10" fill="none" stroke="#fff" />
            </svg>
          </TrayButton>
          <span>ENG</span>
          <Clock>
            9:55 PM
            <br />
            29-Oct-12
          </Clock>
        </Tray>
      </Taskbar>
    </Shell>
  );
}
